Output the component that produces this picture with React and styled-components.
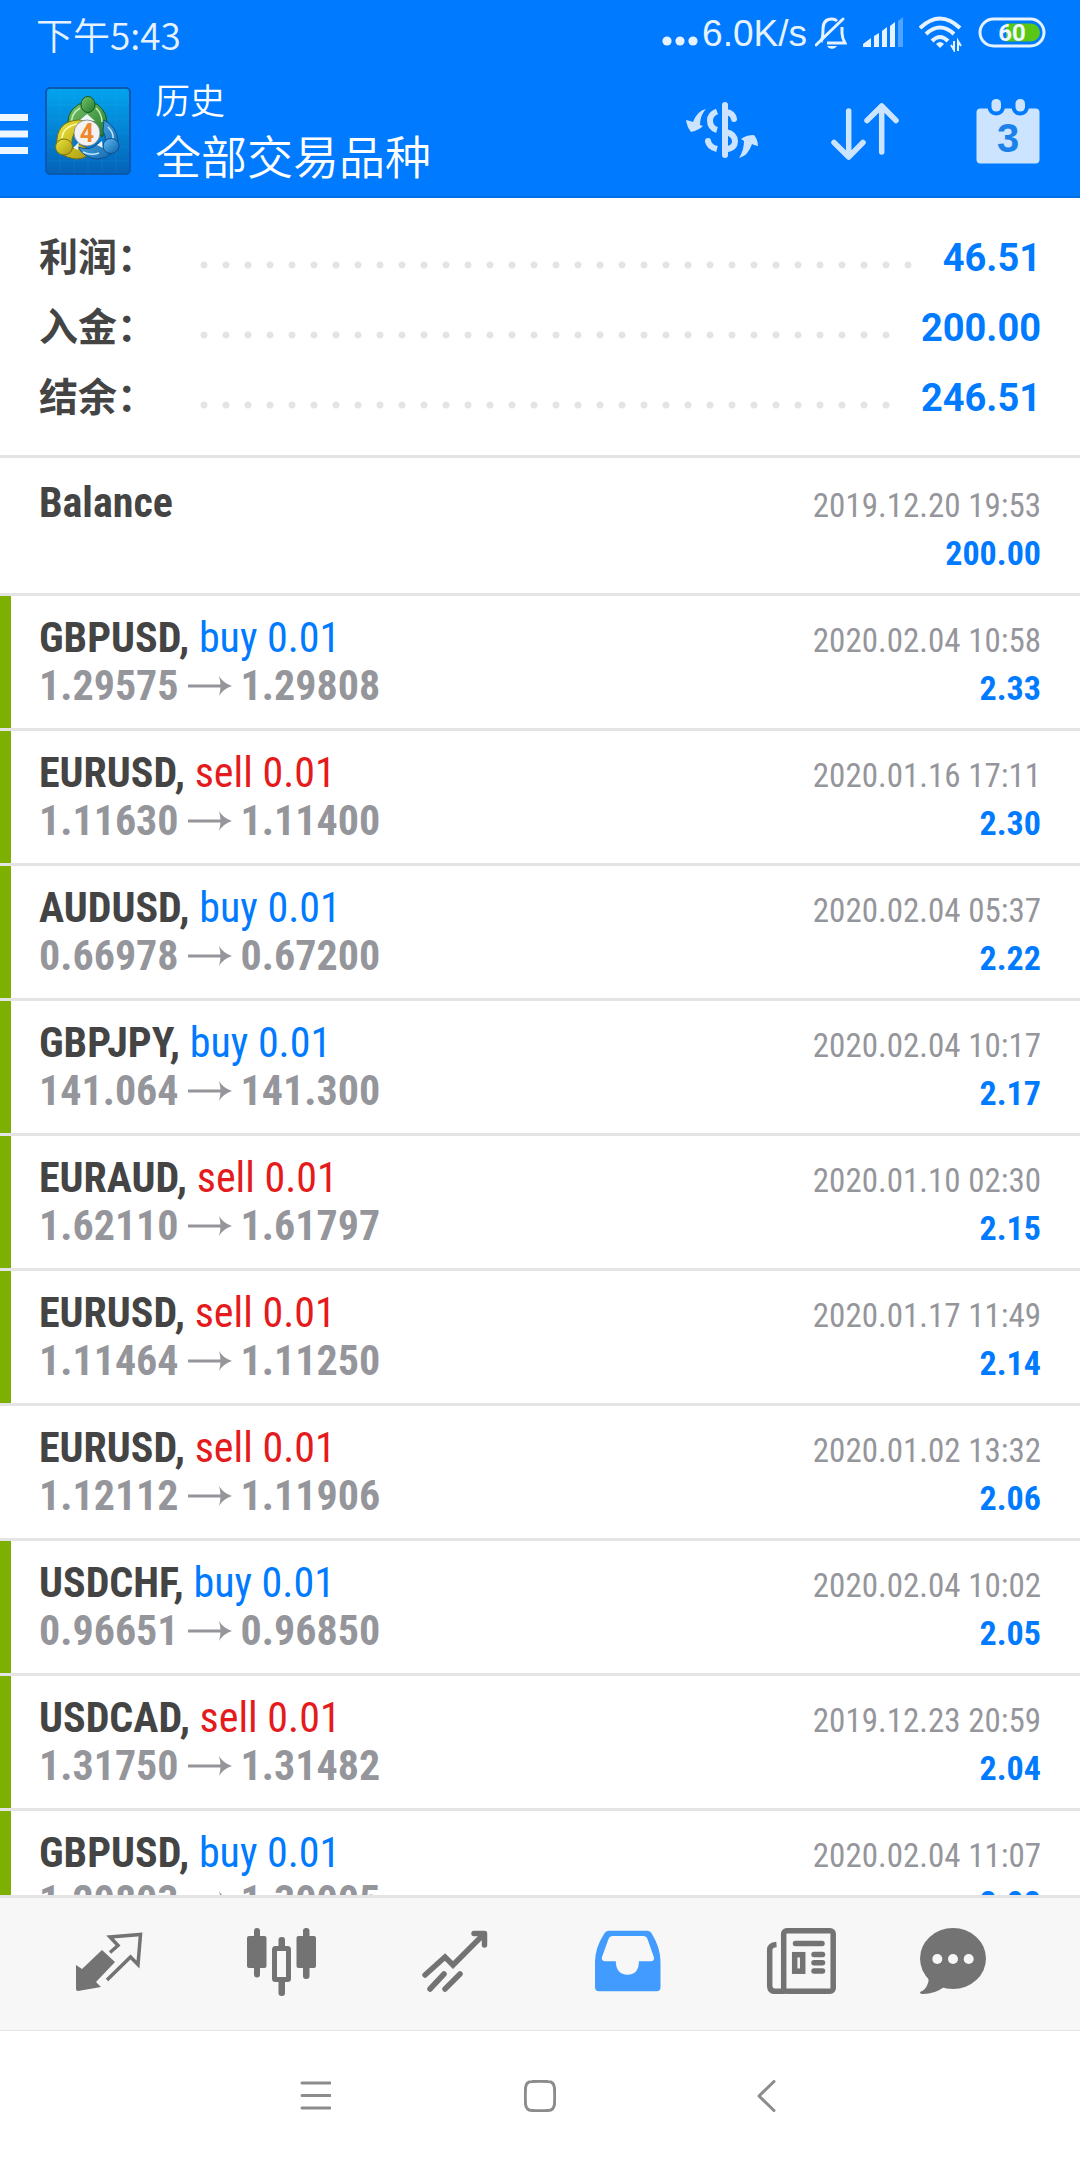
import React from "react";
import styled, { createGlobalStyle } from "styled-components";

const deals = [
    { symbol: "GBPUSD", side: "buy", open: "1.29575", close: "1.29808", time: "2020.02.04 10:58", profit: "2.33", marked: true },
    { symbol: "EURUSD", side: "sell", open: "1.11630", close: "1.11400", time: "2020.01.16 17:11", profit: "2.30", marked: true },
    { symbol: "AUDUSD", side: "buy", open: "0.66978", close: "0.67200", time: "2020.02.04 05:37", profit: "2.22", marked: true },
    { symbol: "GBPJPY", side: "buy", open: "141.064", close: "141.300", time: "2020.02.04 10:17", profit: "2.17", marked: true },
    { symbol: "EURAUD", side: "sell", open: "1.62110", close: "1.61797", time: "2020.01.10 02:30", profit: "2.15", marked: true },
    { symbol: "EURUSD", side: "sell", open: "1.11464", close: "1.11250", time: "2020.01.17 11:49", profit: "2.14", marked: true },
    { symbol: "EURUSD", side: "sell", open: "1.12112", close: "1.11906", time: "2020.01.02 13:32", profit: "2.06", marked: false },
    { symbol: "USDCHF", side: "buy", open: "0.96651", close: "0.96850", time: "2020.02.04 10:02", profit: "2.05", marked: true },
    { symbol: "USDCAD", side: "sell", open: "1.31750", close: "1.31482", time: "2019.12.23 20:59", profit: "2.04", marked: true },
    { symbol: "GBPUSD", side: "buy", open: "1.29803", close: "1.30005", time: "2020.02.04 11:07", profit: "2.02", marked: true },
];

const totals = [
    { label: "利润：", value: "46.51" },
    { label: "入金：", value: "200.00" },
    { label: "结余：", value: "246.51" },
];

function StatusIcons() {
    return (
        <StatusGroup>
            <svg width="32" height="36" viewBox="0 0 32 36">
                <g fill="none" stroke="#e6f2ff" strokeWidth="3">
                    <path d="M6 26 Q8 22 8 13 Q8 3 17 3 Q20 3 22 5 M27 11 V17 Q27 22 30 27 H12" />
                    <path d="M1 29 L28 3" strokeLinecap="round" />
                </g>
                <path d="M12 30 H22 Q20 33 17 33 Q14 33 12 30Z" fill="#e6f2ff" />
            </svg>
            <svg width="40" height="36" viewBox="0 0 40 36" fill="#e6f2ff">
                <path d="M0 31 V28 L8 22 V31Z M11 20 L16 17 V31 H11Z M19 15 L24 11 V31 H19Z M27 10 L32 6 V31 H27Z" />
                <path d="M35 5 L40 1 V31 H35Z" opacity=".35" />
            </svg>
            <svg width="43" height="36" viewBox="0 0 43 36">
                <g fill="none" stroke="#e6f2ff" strokeWidth="4">
                    <path d="M1 12 Q21 -7 41 12" />
                    <path d="M7 18 Q21 5 35 18" />
                    <path d="M13 25 Q21 17 29 25" />
                </g>
                <path d="M17 28 Q21 24 25 28 L21 32Z" fill="#e6f2ff" />
                <path d="M32 29 L35 34 V25 M39 35 V25 L42 30" fill="none" stroke="#e6f2ff" strokeWidth="2" />
            </svg>
            <svg width="68" height="36" viewBox="0 0 68 36">
                <rect x="2" y="3" width="64" height="27" rx="13.5" fill="none" stroke="#e6f2ff" strokeWidth="3" />
                <path d="M28 7.500 H53 A9 9 0 0 1 53 25.500 H28Z" fill="#5ac615" />
                <text x="34" y="25" textAnchor="middle" fontSize="24" fontWeight="700" fill="#f0f8ff">60</text>
            </svg>
        </StatusGroup>
    );
}

function Logo() {
    return (
        <svg width="86" height="88" viewBox="0 0 86 88">
            <defs>
                <linearGradient id="tile" x1="0" y1="0" x2="0" y2="1">
                    <stop offset="0" stopColor="#03a4ee" />
                    <stop offset="1" stopColor="#0462b8" />
                </linearGradient>
                <linearGradient id="leaf" x1="0" y1="0" x2="1" y2="1">
                    <stop offset="0" stopColor="#7cc56a" />
                    <stop offset="1" stopColor="#1d7a2c" />
                </linearGradient>
                <linearGradient id="lemon" x1="0" y1="0" x2="1" y2="1">
                    <stop offset="0" stopColor="#eee53a" />
                    <stop offset="1" stopColor="#a89a10" />
                </linearGradient>
                <linearGradient id="sea" x1="0" y1="0" x2="1" y2="1">
                    <stop offset="0" stopColor="#62bdf2" />
                    <stop offset="1" stopColor="#0b63ab" />
                </linearGradient>
            </defs>
            <rect x="1" y="1" width="84" height="86" rx="4" fill="url(#tile)" stroke="#0a58b0" strokeWidth="2" />
            <path d="M15 2V86 M29 2V86 M43 2V86 M57 2V86 M71 2V86 M2 18H84 M2 32H84 M2 46H84 M2 60H84 M2 74H84" stroke="#4fc0ff" strokeOpacity=".1" />
            <path d="M24 44 Q19 26 34 17 H52 Q65 27 61 42 Q60 47 57 50 L48 34 L36 34 L32 42Z" fill="url(#leaf)" stroke="#145a24" />
            <path d="M27 38 Q25 27 35 21 M51 21 Q57 27 57 35" fill="none" stroke="#c4efb4" strokeWidth="1.500" />
            <path d="M38 33 Q14 32 12 52 Q10 70 32 72 Q43 71 47 64 L34 57 L28 62 Q24 50 33 42Z" fill="url(#lemon)" stroke="#7a7010" />
            <path d="M32 37 Q18 40 17 51" fill="none" stroke="#fffbb0" strokeWidth="1.500" />
            <path d="M59 33 Q72 40 73 54 Q70 71 52 72 Q39 71 33 60 Q46 65 53 56 L58 60 Q63 54 58 44Z" fill="url(#sea)" stroke="#0b4f91" />
            <path d="M63 40 Q69 46 68 52 M38 65 Q46 69 54 66" fill="none" stroke="#bfe5ff" strokeWidth="1.500" />
            <path d="M35 33 L42 27 L50 34Z M28 61 L34 55 L33 63Z M52 58 L57 54 L58 61Z" fill="#eef6f8" />
            <ellipse cx="43" cy="17.500" rx="7" ry="8" fill="url(#leaf)" stroke="#145a24" />
            <ellipse cx="19" cy="60" rx="8.500" ry="8" fill="url(#lemon)" stroke="#7a7010" />
            <ellipse cx="66" cy="59" rx="8" ry="7.500" fill="url(#sea)" stroke="#0b4f91" />
            <circle cx="42" cy="46" r="13" fill="#f2f2f4" stroke="#777" strokeWidth=".7" />
            <text x="42" y="55" textAnchor="middle" fontSize="25" fontWeight="700" fill="#f0872a">4</text>
        </svg>
    );
}

function CurrencyIcon() {
    return (
        <svg width="96" height="96" viewBox="0 0 96 96">
            <g fill="none" stroke="#cce4ff" strokeWidth="6">
                <path d="M53 22V72" strokeLinecap="round" />
                <path d="M45 28.500 Q38 31 38 37.500 Q38 45 45 47" />
                <path d="M36 58 Q37 64 45 66" />
                <path d="M36 58 V58" strokeLinecap="round" />
                <path d="M54 29 Q61 30 62 36" strokeLinecap="round" />
                <path d="M54 49 Q63 51 63 58.500 Q63 65 54 66.500" />
            </g>
            <path d="M14 37 L18 38 L21 39 Q25 28 34 26 Q28 32 28 42 L31 43 Q27 47 19 49 Q15 44 14 37Z" fill="#cce4ff" />
            <path d="M86 63 L82 62 L80 61 Q76 73 67 75 Q72 67 72 58 L69 56 Q74 52 82 52 Q86 57 86 63Z" fill="#cce4ff" />
        </svg>
    );
}

function SortIcon() {
    return (
        <svg width="96" height="96" viewBox="0 0 96 96" fill="none" stroke="#cce4ff" strokeWidth="5.500" strokeLinecap="round" strokeLinejoin="round">
            <path d="M32.700 28V74 M18 59.500 L32.700 74 L47 59.500" />
            <path d="M65.700 69V23 M51 37.500 L65.700 23 L80 37.500" />
        </svg>
    );
}

function CalendarIcon() {
    return (
        <svg width="96" height="96" viewBox="0 0 96 96">
            <rect x="16.500" y="25.500" width="63" height="55" rx="4" fill="#cce4ff" />
            <g fill="#cce4ff" stroke="#007aff" strokeWidth="8" paintOrder="stroke">
                <rect x="31.500" y="16" width="9.500" height="12.500" rx="4.500" />
                <rect x="55.500" y="16" width="9.500" height="12.500" rx="4.500" />
            </g>
            <text x="48" y="69" textAnchor="middle" fontSize="40" fontWeight="700" fill="#1a80ea">3</text>
        </svg>
    );
}

function Arrow() {
    return (
        <svg width="46" height="22" viewBox="0 0 46 22">
            <path d="M1 11H38" stroke="#95969b" strokeWidth="3" />
            <path d="M32 1 Q36 8 45 11 Q36 14 32 21 Q35 11 32 1Z" fill="#95969b" />
        </svg>
    );
}

const tabs = [
    {
        name: "行情",
        icon: (
            <>
                <path d="M28 67 L34 71 L54 52 L67 64 L48 84 L53 89 L30 93 Q28 93 28 91Z" fill="#737373" />
                <path d="M62 54.500 L70 47.500 L62 39 L92.500 36.500 L90 66.500 L82.500 59 L59 82" fill="none" stroke="#737373" strokeWidth="3.500" />
            </>
        ),
    },
    {
        name: "图表",
        icon: (
            <g fill="#737373">
                <rect x="26" y="38" width="19.500" height="32" rx="2" />
                <rect x="33" y="30" width="6" height="49.500" rx="3" />
                <rect x="75.500" y="38" width="19.500" height="32" rx="2" />
                <rect x="82" y="30" width="6.500" height="51" rx="3" />
                <rect x="57.500" y="39" width="6.500" height="12" rx="3" />
                <rect x="57.500" y="80" width="6.500" height="18" rx="3" />
                <rect x="53.500" y="50.500" width="14" height="31" rx="1" fill="none" stroke="#737373" strokeWidth="5" />
            </g>
        ),
    },
    {
        name: "交易",
        icon: (
            <g fill="none" stroke="#737373" strokeWidth="5.500" strokeLinecap="round">
                <path d="M31 77 L51 59 L59 67 L90 36" strokeLinejoin="miter" />
                <path d="M80 35.500 H90.500 V47" strokeLinejoin="round" />
                <path d="M36 91 L50 76 M51 91 L66 76" />
            </g>
        ),
    },
    {
        name: "历史",
        icon: (
            <path
                fill="#429cff"
                fillRule="evenodd"
                d="M29 64 Q29 50 38 36 Q40 32.700 43 32.700 H81 Q84 32.700 86 36 Q94.500 50 94.500 64 V89 Q94.500 93.300 90.500 93.300 H33 Q29 93.300 29 89Z
                M49.800 63.300 H38.500 Q35 62.500 36 59 L42.500 41 Q43.500 38 47 38 H77 Q80.500 38 81.500 41 L87.800 59 Q88.800 62.500 85.500 63.300 H72.900 Q73 76.700 61.500 76.700 Q50 76.700 49.800 63.300Z"
            />
        ),
    },
    {
        name: "新闻",
        icon: (
            <g fill="none" stroke="#737373" strokeWidth="5.500">
                <rect x="44.700" y="32.700" width="49.500" height="60.500" rx="3" />
                <path d="M37.500 46.500 Q30.700 47 30.700 52 V88 Q31 93.300 36 93.300 H46" />
                <path d="M56.500 45.500 H83 M75 56.500 H83.500 M75 64.700 H83.500 M75 73 H83.500" strokeLinecap="round" />
                <rect x="55.700" y="56.700" width="8" height="16.500" />
            </g>
        ),
    },
    {
        name: "消息",
        icon: (
            <>
                <ellipse cx="41" cy="60.500" rx="33" ry="30.500" fill="#737373" />
                <path d="M13 76 Q18 81 16 85 Q14 92 8 94 Q8 96 11 96 Q23 96 32 89Z" fill="#737373" />
                <g fill="#f7f7f7">
                    <circle cx="25.300" cy="61" r="5" />
                    <circle cx="41" cy="61" r="5" />
                    <circle cx="56.700" cy="61" r="5" />
                </g>
            </>
        ),
    },
];

export default function App() {
    return (
        <Page>
            <GlobalStyle />
            <Header>
                <StatusBar>
                    <Clock>下午5:43</Clock>
                    <Speed>
                        <svg width="36" height="10" viewBox="0 0 36 10" fill="#e6f2ff">
                            <circle cx="5" cy="5" r="4.600" />
                            <circle cx="18" cy="5" r="4.600" />
                            <circle cx="31" cy="5" r="4.600" />
                        </svg>
                        6.0K/s
                    </Speed>
                    <StatusIcons />
                </StatusBar>
                <AppBar>
                    <MenuButton aria-label="菜单">
                        <svg width="28" height="40" viewBox="0 0 28 40">
                            <path d="M0 3.500H28 M0 20H28 M0 36.500H28" stroke="#eef6ff" strokeWidth="7" />
                        </svg>
                    </MenuButton>
                    <Logo />
                    <Titles>
                        <Caption>历史</Caption>
                        <Title>全部交易品种</Title>
                    </Titles>
                    <HeaderButton aria-label="货币"><CurrencyIcon /></HeaderButton>
                    <HeaderButton aria-label="排序"><SortIcon /></HeaderButton>
                    <HeaderButton aria-label="日期"><CalendarIcon /></HeaderButton>
                </AppBar>
            </Header>
            <Summary>
                {totals.map((t) => (
                    <Total key={t.label}>
                        <TotalLabel>{t.label}</TotalLabel>
                        <Dots />
                        <TotalValue>{t.value}</TotalValue>
                    </Total>
                ))}
            </Summary>
            <List>
                <Row>
                    <RowBody>
                        <Line>
                            <Symbol>Balance</Symbol>
                            <Time>2019.12.20 19:53</Time>
                        </Line>
                        <Line>
                            <Price>&nbsp;</Price>
                            <Profit>200.00</Profit>
                        </Line>
                    </RowBody>
                </Row>
                {deals.map((d) => (
                    <Row key={d.time}>
                        <RowBody $marked={d.marked}>
                            <Line>
                                <Symbol>
                                    {d.symbol}, <Side $side={d.side}>{d.side} 0.01</Side>
                                </Symbol>
                                <Time>{d.time}</Time>
                            </Line>
                            <Line>
                                <Price>
                                    {d.open}
                                    <Arrow />
                                    {d.close}
                                </Price>
                                <Profit>{d.profit}</Profit>
                            </Line>
                        </RowBody>
                    </Row>
                ))}
            </List>
            <TabBar>
                {tabs.map((t) => (
                    <TabButton key={t.name} aria-label={t.name}>
                        <svg width="120" height="132" viewBox="0 0 120 132">{t.icon}</svg>
                    </TabButton>
                ))}
            </TabBar>
            <SystemBar>
                <SystemButton aria-label="任务">
                    <svg width="32" height="32" viewBox="0 0 32 32">
                        <path d="M3 3H31 M3 15.500H31 M3 28H31" />
                    </svg>
                </SystemButton>
                <SystemButton aria-label="主页">
                    <svg width="32" height="32" viewBox="0 0 32 32">
                        <path d="M8 1.500 Q16 .8 24 1.500 Q30 1.500 30.500 8 Q31 16 30.500 24 Q30 30.500 24 30.500 Q16 31.200 8 30.500 Q2 30.500 1.500 24 Q1 16 1.500 8 Q2 1.500 8 1.500Z" />
                    </svg>
                </SystemButton>
                <SystemButton aria-label="返回">
                    <svg width="32" height="32" viewBox="0 0 32 32">
                        <path d="M25 1.500 L10 16 L25 30.500" />
                    </svg>
                </SystemButton>
            </SystemBar>
        </Page>
    );
}

const GlobalStyle = createGlobalStyle`
* {
    box-sizing: border-box;
}
body {
    margin: 0;
    background: white;
    font-family: Roboto, "Noto Sans CJK SC", sans-serif;
}
svg {
    display: block;
    flex: none;
}
button {
    border: 0;
    padding: 0;
    background: none;
    cursor: pointer;
}
`;

const Page = styled.div`
    display: flex;
    flex-direction: column;
    height: 100vh;
`;

const Header = styled.header`
    background: #007aff;
    border-bottom: 2px solid #006fe6;
`;

const StatusBar = styled.div`
    display: flex;
    align-items: flex-start;
    height: 66px;
    padding: 16px 34px 0 36px;
    color: #e6f2ff;
    font-size: 37px;
    line-height: 36px;
`;

const Clock = styled.span`
    flex: 1;
    font-family: "Noto Sans CJK SC", sans-serif;
    font-weight: 350;
`;

const Speed = styled.span`
    display: flex;
    align-items: baseline;
    gap: 4px;
    margin-right: 8px;
    font-family: "Liberation Sans", sans-serif;
`;

const StatusGroup = styled.div`
    display: flex;
    gap: 16px;
`;

const AppBar = styled.div`
    display: flex;
    align-items: center;
    height: 130px;
`;

const MenuButton = styled.button`
    margin-right: 17px;
    padding-top: 6px;
`;

const Titles = styled.div`
    flex: 1;
    padding: 0 0 6px 24px;
    color: white;
    font-family: "Noto Sans CJK SC", sans-serif;
    font-weight: 350;
`;

const Caption = styled.div`
    font-size: 35px;
    line-height: 52px;
`;

const Title = styled.h1`
    margin: 0;
    font-size: 46px;
    font-weight: 350;
    line-height: 58px;
`;

const HeaderButton = styled.button`
    display: flex;
    justify-content: center;
    width: 144px;
`;

const Summary = styled.section`
    padding: 21px 39px 26px;
    border-bottom: 3px solid #e4e4e4;
`;

const Total = styled.div`
    display: flex;
    align-items: baseline;
    height: 70px;
    line-height: 70px;
`;

const TotalLabel = styled.span`
    width: 154px;
    color: #444;
    font-family: "Noto Sans CJK SC", sans-serif;
    font-size: 39px;
    font-weight: 700;
`;

const Dots = styled.span`
    flex: 1;
    align-self: center;
    height: 8px;
    margin: 22px 20px 0 0;
    background: radial-gradient(circle, #e4e4e4 3px, transparent 4px) 0 0 / 22px 8px repeat-x;
`;

const TotalValue = styled.span`
    color: #007aff;
    font-size: 38px;
    font-weight: 700;
`;

const List = styled.ul`
    flex: 1;
    min-height: 0;
    margin: 0;
    padding: 3px 0 0;
    overflow: hidden;
    list-style: none;
    font-family: "Roboto Condensed", Roboto, sans-serif;
`;

const Row = styled.li`
    border-bottom: 3px solid #e4e4e4;
`;

const RowBody = styled.div`
    padding: 18px 39px 18px 28px;
    border-left: 11px solid ${(p) => (p.$marked ? "#7db000" : "transparent")};
`;

const Line = styled.div`
    display: flex;
    justify-content: space-between;
    align-items: baseline;
    height: 48px;
    line-height: 48px;
`;

const Symbol = styled.span`
    color: #444;
    font-size: 42px;
    font-weight: 700;
`;

const Side = styled.span`
    color: ${(p) => (p.$side === "buy" ? "#007aff" : "#e41a1c")};
    font-weight: 400;
`;

const Price = styled.span`
    display: flex;
    align-items: center;
    gap: 8px;
    color: #95969b;
    font-size: 42px;
    font-weight: 700;
`;

const Time = styled.time`
    color: #95969b;
    font-size: 33px;
`;

const Profit = styled.span`
    color: #007aff;
    font-size: 34px;
    font-weight: 700;
`;

const TabBar = styled.nav`
    display: flex;
    padding: 0 22px;
    background: #f7f7f7;
    border-top: 3px solid #e4e4e4;
    border-bottom: 1px solid #e4e4e4;
`;

const TabButton = styled.button`
    display: flex;
    flex: 1;
    justify-content: center;
`;

const SystemBar = styled.nav`
    display: flex;
    justify-content: center;
    height: 129px;
`;

const SystemButton = styled.button`
    display: flex;
    align-items: center;
    justify-content: center;
    width: 225px;

    path {
        fill: none;
        stroke: #8c8c8c;
        stroke-width: 3;
        stroke-linecap: round;
        stroke-linejoin: round;
    }
`;
